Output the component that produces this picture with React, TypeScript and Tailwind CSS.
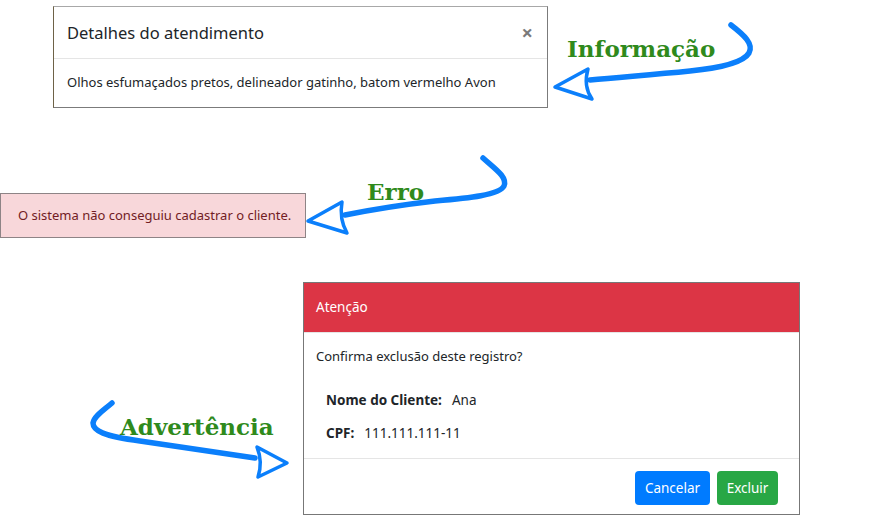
import React from 'react';

const Arrows: React.FC = () => (
  <svg
    className="absolute inset-0 pointer-events-none"
    width={872}
    height={520}
    viewBox="0 0 872 520"
    fill="none"
  >
    {/* Informação */}
    <path d="M731,25 C744,35 754,44 749,53 C743,63 720,68 690,71 C650,75 620,77 590,80" stroke="#0b7ffb" strokeWidth={5.5} strokeLinecap="round" />
    <path d="M555,87 L588,69 Q583,86 592,99 Z" stroke="#0b7ffb" strokeWidth={3.5} strokeLinejoin="round" />
    {/* Erro */}
    <path d="M483,158 C494,168 508,177 504,186 C499,195 470,198 435,201 C400,205 370,210 345,215" stroke="#0b7ffb" strokeWidth={5.5} strokeLinecap="round" />
    <path d="M308,221 L342,202 Q339,219 347,233 Z" stroke="#0b7ffb" strokeWidth={3.5} strokeLinejoin="round" />
    {/* Advertência */}
    <path d="M112,403 C104,410 94,416 93,423 C93,431 104,436 140,441 C180,447 220,453 255,458" stroke="#0b7ffb" strokeWidth={5.5} strokeLinecap="round" />
    <path d="M287,463 L257,447 Q263,462 258,477 Z" stroke="#0b7ffb" strokeWidth={3.5} strokeLinejoin="round" />
  </svg>
);

const Label: React.FC<{ text: string; className: string }> = ({ text, className }) => (
  <span
    className={`absolute text-[23px] leading-none font-bold text-[#2f8a1c] ${className}`}
    style={{ fontFamily: '"DejaVu Serif", "Liberation Serif", serif' }}
  >
    {text}
  </span>
);

export default function App() {
  return (
    <div
      className="relative w-[872px] h-[520px] bg-white overflow-hidden text-[#212529]"
      style={{ fontFamily: '"Noto Sans", "Open Sans", sans-serif' }}
    >
      {/* Informação: detalhes do atendimento */}
      <div className="ml-[53px] pt-[6px]">
        <div className="w-[495px] border border-[#7b7b7b] border-t-[#a8a8a8] border-l-[#6e6247] bg-white">
          <div className="flex items-center justify-between h-[52px] pl-[13px] pr-[14px] border-b border-[#e5e5e5]">
            <span className="text-[16.5px] pt-[2px]">Detalhes do atendimento</span>
            <span className="text-[20px] font-bold text-[#7a7a7a] leading-none">×</span>
          </div>
          <div className="flex items-center h-[48px] pl-[13px] text-[13px]">
            Olhos esfumaçados pretos, delineador gatinho, batom vermelho Avon
          </div>
        </div>
      </div>

      {/* Erro: alerta */}
      <div className="mt-[85px] w-[306px] h-[45px] flex items-center pl-[17px] bg-[#f8d7da] border border-[#8e8486] text-[#721c24] text-[13px]">
        O sistema não conseguiu cadastrar o cliente.
      </div>

      {/* Advertência: confirmação */}
      <div className="ml-[303px] mt-[44px] w-[497px] border border-[#777] bg-white">
        <div className="flex items-center h-[49px] px-[12px] bg-[#dc3545] text-white text-[13.5px]">
          Atenção
        </div>
        <div className="h-[126px] border-t border-[#e5e5e5] px-[12px] pt-[14px] text-[13px]">
          <p>Confirma exclusão deste registro?</p>
          <div className="pl-[10px] mt-[23px] flex flex-col gap-[13px] text-[13.5px]">
            <div className="flex items-center gap-[10px]">
              <span className="font-bold">Nome do Cliente:</span>
              <span>Ana</span>
            </div>
            <div className="flex items-center gap-[10px]">
              <span className="font-bold">CPF:</span>
              <span>111.111.111-11</span>
            </div>
          </div>
        </div>
        <div className="h-[56px] border-t border-[#e5e5e5] flex items-center justify-end gap-[7px] pr-[21px] pt-[3px]">
          <button className="h-[34px] w-[75px] rounded-[4px] bg-[#007bff] text-white text-[13.5px]">Cancelar</button>
          <button className="h-[34px] w-[61px] rounded-[4px] bg-[#28a745] text-white text-[13.5px]">Excluir</button>
        </div>
      </div>

      <Arrows />
      <Label text="Informação" className="left-[567px] top-[37px]" />
      <Label text="Erro" className="left-[367px] top-[180px]" />
      <Label text="Advertência" className="left-[120px] top-[415px]" />
    </div>
  );
}
